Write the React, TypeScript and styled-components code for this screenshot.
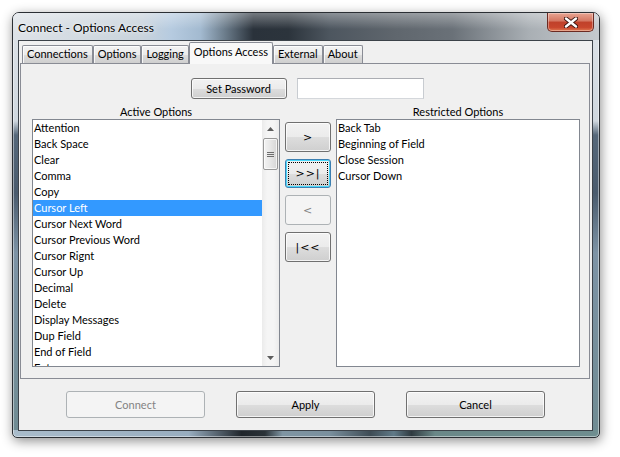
import React from "react";
import styled, { createGlobalStyle, css } from "styled-components";

const GlobalStyle = createGlobalStyle`
  html, body {
    margin: 0;
    padding: 0;
    background: #ffffff;
  }
  body {
    font-family: Lato, "Liberation Sans", sans-serif;
    font-size: 11px;
    color: #000;
  }
  #root {
    width: 620px;
    height: 457px;
    overflow: hidden;
  }
`;

const Window = styled.div`
  box-sizing: border-box;
  margin: 12px 0 0 12px;
  width: 588px;
  height: 426px;
  border: 1px solid #2b2f34;
  border-radius: 7px 7px 5px 5px;
  display: flex;
  flex-direction: column;
  overflow: hidden;
  background:
    linear-gradient(
        to right,
        #a9bccb 0%,
        #98adbf 30%,
        #1f252b 39%,
        #2a3238 43%,
        #7f95a3 46%,
        #7a909e 54%,
        #3e4c55 61%,
        #607a88 65%,
        #2f3a40 68%,
        #6a8888 72%,
        #6f8e90 100%
      )
      left bottom / 100% 7px no-repeat,
    linear-gradient(
      to bottom,
      #dfe4e9 0px,
      #cfd7de 108px,
      #56687a 122px,
      #4a5b6d 180px,
      #7d93a5 240px,
      #6f8b92 426px
    );
  box-shadow: inset 0 0 0 1px rgba(255, 255, 255, 0.45),
    1px 3px 12px rgba(0, 0, 0, 0.45);
`;

const TitleBar = styled.div`
  height: 27px;
  display: flex;
  align-items: flex-start;
  background:
    linear-gradient(to bottom, rgba(255, 255, 255, 0.35), rgba(255, 255, 255, 0) 60%),
    linear-gradient(
      to right,
      #dde2e7 0%,
      #c9d3dc 22%,
      #b6cbe0 27%,
      #a3bad0 32%,
      #6e7f8e 36%,
      #2a323b 41%,
      #2c343c 47%,
      #4d565f 54%,
      #5f666d 65%,
      #6a7178 75%,
      #a9afb4 88%,
      #c5c9cd 100%
    );
`;

const Title = styled.div`
  padding: 7px 0 0 5px;
  font-size: 12px;
  color: #000;
  text-shadow: 0 0 6px rgba(255, 255, 255, 0.9), 0 0 2px rgba(255, 255, 255, 0.8);
`;

const CloseButton = styled.div`
  margin-left: auto;
  margin-right: 5px;
  width: 47px;
  height: 19px;
  box-sizing: border-box;
  border: 1px solid #6b2a22;
  border-top: none;
  border-radius: 0 0 5px 5px;
  display: flex;
  align-items: center;
  justify-content: center;
  background: linear-gradient(
    to bottom,
    #e8a593 0%,
    #d47661 45%,
    #c0412a 50%,
    #c8462d 80%,
    #e07a52 100%
  );
  box-shadow: inset 0 0 0 1px rgba(255, 255, 255, 0.35);
`;

const Client = styled.div`
  flex: 1;
  margin: 0 6px 6px 5px;
  border: 1px solid #3c4249;
  background: #f0f0f0;
  display: flex;
  flex-direction: column;
`;

const TabStrip = styled.div`
  height: 22px;
  padding-left: 3px;
  display: flex;
  align-items: flex-end;
  position: relative;
  z-index: 1;
`;

const Tab = styled.div<{ $active?: boolean }>`
  box-sizing: border-box;
  height: 18px;
  padding: 0 4px;
  border: 1px solid #898c95;
  border-bottom: none;
  border-radius: 2px 2px 0 0;
  line-height: 16px;
  white-space: nowrap;
  background: linear-gradient(
    to bottom,
    #f3f3f3 0%,
    #ebebeb 50%,
    #dddddd 51%,
    #cfcfcf 100%
  );
  box-shadow: inset 1px 1px 0 rgba(255, 255, 255, 0.8);

  ${(p) =>
    p.$active &&
    css`
      height: 22px;
      margin-bottom: -1px;
      padding: 0 4px;
      line-height: 17px;
      background: #f8f8f8;
      box-shadow: none;
    `}
`;

const Page = styled.div`
  box-sizing: border-box;
  height: 316px;
  margin: 0 2px 0 1px;
  border: 1px solid #898c95;
  background: #f0f0f0;
  display: flex;
  flex-direction: column;
  align-items: stretch;
`;

const PasswordRow = styled.div`
  margin-top: 14px;
  display: flex;
  justify-content: center;
  gap: 10px;
  padding-left: 4px;
`;

const Button = styled.button<{ $w: number; $h: number; $focused?: boolean; $glyph?: boolean }>`
  box-sizing: border-box;
  position: relative;
  width: ${(p) => p.$w}px;
  height: ${(p) => p.$h}px;
  padding: 0;
  font-family: inherit;
  font-size: 11px;
  color: #000;
  border: 1px solid #707070;
  border-radius: 3px;
  background: linear-gradient(
    to bottom,
    #f2f2f2 0%,
    #ebebeb 50%,
    #dddddd 51%,
    #cfcfcf 100%
  );
  box-shadow: inset 0 0 0 1px rgba(255, 255, 255, 0.75);

  ${(p) =>
    p.$glyph &&
    css`
      font-family: "DejaVu Sans", "Liberation Sans", sans-serif;
      font-size: 11px;
      letter-spacing: 1px;
    `}

  &:disabled {
    border-color: #adb2b5;
    background: #f4f4f4;
    color: #838383;
    box-shadow: none;
  }

  ${(p) =>
    p.$focused &&
    css`
      border-color: #3c7fb1;
      box-shadow: inset 0 0 0 1px #48d8fb;
      &::after {
        content: "";
        position: absolute;
        inset: 2px;
        border: 1px dotted #000;
      }
    `}
`;

const TextBox = styled.input`
  box-sizing: border-box;
  width: 127px;
  height: 21px;
  margin: 0;
  border: 1px solid #abadb3;
  border-color: #abadb3 #c8ccd1 #d4d7db #c8ccd1;
  background: #fff;
`;

const Columns = styled.div`
  margin-top: 6px;
  padding-left: 11px;
  display: grid;
  grid-template-columns: 248px 46px 244px;
  column-gap: 5px;
`;

const Column = styled.div`
  display: flex;
  flex-direction: column;
`;

const Caption = styled.div`
  height: 14px;
  line-height: 14px;
  text-align: center;
`;

const ListBox = styled.div`
  box-sizing: border-box;
  height: 248px;
  border: 1px solid #828790;
  background: #fff;
  display: flex;
  overflow: hidden;
`;

const Items = styled.div`
  flex: 1;
  overflow: hidden;
`;

const Item = styled.div<{ $selected?: boolean }>`
  height: 16px;
  line-height: 16px;
  padding-left: 1px;
  white-space: nowrap;
  ${(p) =>
    p.$selected &&
    css`
      background: #3399ff;
      color: #fff;
    `}
`;

const ScrollBar = styled.div`
  width: 17px;
  display: flex;
  flex-direction: column;
  background: linear-gradient(to right, #ebebeb, #f5f5f5 30%, #f5f5f5 70%, #ebebeb);
`;

const ScrollArrow = styled.div`
  height: 17px;
  display: flex;
  align-items: center;
  justify-content: center;
`;

const Track = styled.div`
  flex: 1;
  padding: 1px 1px 0 1px;
`;

const Thumb = styled.div`
  box-sizing: border-box;
  height: 32px;
  border: 1px solid #979797;
  border-radius: 2px;
  background: linear-gradient(to right, #f3f3f3, #e6e6e6 50%, #d6d6d6);
  box-shadow: inset 0 0 0 1px rgba(255, 255, 255, 0.7);
  display: flex;
  align-items: center;
  justify-content: center;
`;

const MoveButtons = styled.div`
  margin-top: 17px;
  display: flex;
  flex-direction: column;
  gap: 7px;
`;

const BottomBar = styled.div`
  flex: 1;
  padding-top: 12px;
  display: flex;
  align-items: flex-start;
  justify-content: center;
  gap: 31px;
`;

const activeOptions = [
  "Attention",
  "Back Space",
  "Clear",
  "Comma",
  "Copy",
  "Cursor Left",
  "Cursor Next Word",
  "Cursor Previous Word",
  "Cursor Rignt",
  "Cursor Up",
  "Decimal",
  "Delete",
  "Display Messages",
  "Dup Field",
  "End of Field",
  "Enter",
];

const restrictedOptions = [
  "Back Tab",
  "Beginning of Field",
  "Close Session",
  "Cursor Down",
];

const tabs = ["Connections", "Options", "Logging", "Options Access", "External", "About"];

const Arrow = ({ down }: { down?: boolean }) => (
  <svg width="7" height="4" viewBox="0 0 7 4">
    <polygon points={down ? "0,0 7,0 3.5,4" : "0,4 7,4 3.5,0"} fill="#5d5d5d" />
  </svg>
);

const Grip = () => (
  <svg width="7" height="7" viewBox="0 0 7 7">
    <path d="M0 1.5h7M0 3.5h7M0 5.5h7" stroke="#6d6d6d" strokeWidth="1" />
  </svg>
);

const CloseGlyph = () => (
  <svg width="14" height="11" viewBox="0 0 14 11">
    <path d="M2 1.5L12 9.5M12 1.5L2 9.5" stroke="#3a1510" strokeWidth="4.2" strokeLinecap="round" />
    <path d="M2 1.5L12 9.5M12 1.5L2 9.5" stroke="#ffffff" strokeWidth="2.4" strokeLinecap="round" />
  </svg>
);

export default function App() {
  return (
    <>
      <GlobalStyle />
      <Window>
        <TitleBar>
          <Title>Connect - Options Access</Title>
          <CloseButton>
            <CloseGlyph />
          </CloseButton>
        </TitleBar>
        <Client>
          <TabStrip>
            {tabs.map((t) => (
              <Tab key={t} $active={t === "Options Access"}>
                {t}
              </Tab>
            ))}
          </TabStrip>
          <Page>
            <PasswordRow>
              <Button $w={96} $h={21}>Set Password</Button>
              <TextBox />
            </PasswordRow>
            <Columns>
              <Column>
                <Caption>Active Options</Caption>
                <ListBox>
                  <Items>
                    {activeOptions.map((o) => (
                      <Item key={o} $selected={o === "Cursor Left"}>
                        {o}
                      </Item>
                    ))}
                  </Items>
                  <ScrollBar>
                    <ScrollArrow>
                      <Arrow />
                    </ScrollArrow>
                    <Track>
                      <Thumb>
                        <Grip />
                      </Thumb>
                    </Track>
                    <ScrollArrow>
                      <Arrow down />
                    </ScrollArrow>
                  </ScrollBar>
                </ListBox>
              </Column>
              <MoveButtons>
                <Button $w={46} $h={30} $glyph>&gt;</Button>
                <Button $w={46} $h={29} $glyph $focused>&gt;&gt;|</Button>
                <Button $w={46} $h={30} $glyph disabled>&lt;</Button>
                <Button $w={46} $h={30} $glyph>|&lt;&lt;</Button>
              </MoveButtons>
              <Column>
                <Caption>Restricted Options</Caption>
                <ListBox>
                  <Items>
                    {restrictedOptions.map((o) => (
                      <Item key={o}>{o}</Item>
                    ))}
                  </Items>
                </ListBox>
              </Column>
            </Columns>
          </Page>
          <BottomBar>
            <Button $w={139} $h={27} disabled>Connect</Button>
            <Button $w={139} $h={27}>Apply</Button>
            <Button $w={139} $h={27}>Cancel</Button>
          </BottomBar>
        </Client>
      </Window>
    </>
  );
}
